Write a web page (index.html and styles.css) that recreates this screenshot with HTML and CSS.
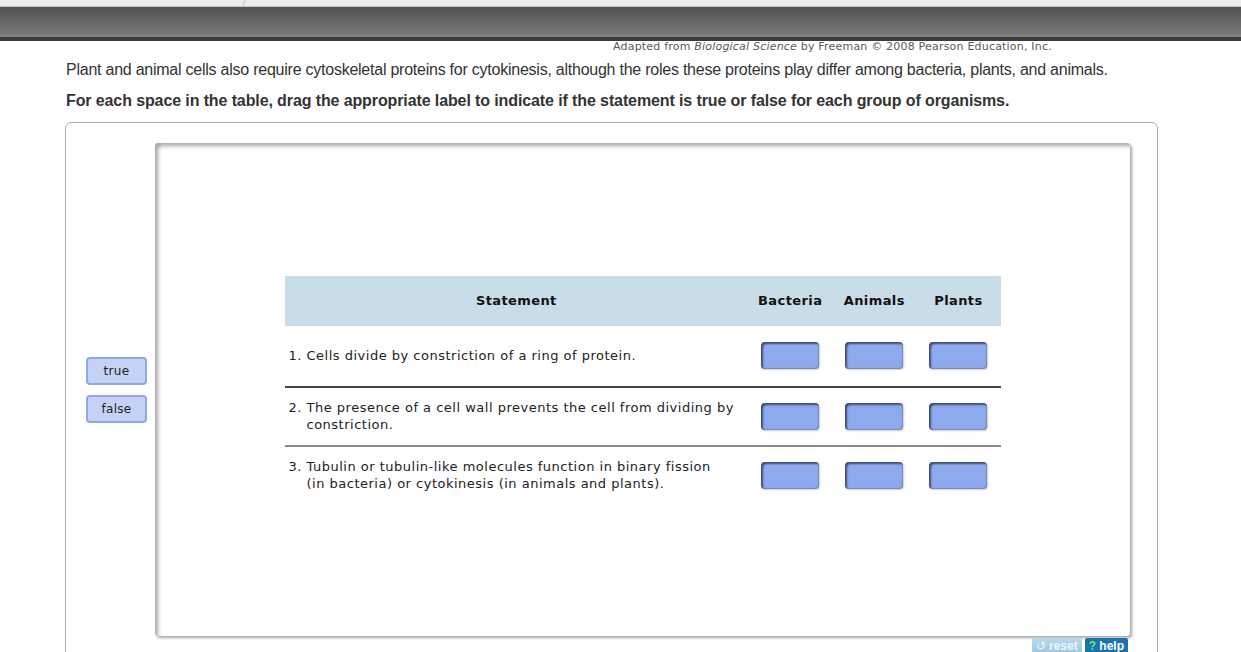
FILE: index.html
```html
<!DOCTYPE html>
<html lang="en">
<head>
<meta charset="utf-8">
<title>Cytokinesis activity</title>
<link rel="stylesheet" href="styles.css">
</head>
<body>
<div class="topstrip"><svg class="tick" width="4" height="6" viewBox="0 0 4 6"><line x1="3.5" y1="0" x2="0.5" y2="6" stroke="#bbb" stroke-width="1"/></svg></div>
<div class="bar"></div>
<div class="caption">Adapted from <i>Biological Science</i> by Freeman © 2008 Pearson Education, Inc.</div>
<p class="intro">Plant and animal cells also require cytoskeletal proteins for cytokinesis, although the roles these proteins play differ among bacteria, plants, and animals.</p>
<p class="instr">For each space in the table, drag the appropriate label to indicate if the statement is true or false for each group of organisms.</p>
<div class="activity">
  <div class="workspace">
    <div class="labels">
      <div class="label">true</div>
      <div class="label">false</div>
    </div>
    <div class="frame">
      <table class="grid">
        <thead>
          <tr>
            <th class="col-statement">Statement</th>
            <th class="col-group">Bacteria</th>
            <th class="col-group">Animals</th>
            <th class="col-group">Plants</th>
          </tr>
        </thead>
        <tbody>
          <tr class="row-1">
            <td class="statement"><div class="item">1. Cells divide by constriction of a ring of protein.</div></td>
            <td class="slot"><div class="drop"></div></td>
            <td class="slot"><div class="drop"></div></td>
            <td class="slot"><div class="drop"></div></td>
          </tr>
          <tr class="row-2">
            <td class="statement"><div class="item">2. The presence of a cell wall prevents the cell from dividing by constriction.</div></td>
            <td class="slot"><div class="drop"></div></td>
            <td class="slot"><div class="drop"></div></td>
            <td class="slot"><div class="drop"></div></td>
          </tr>
          <tr class="row-3">
            <td class="statement"><div class="item">3. Tubulin or tubulin-like molecules function in binary fission <span class="keep">(in bacteria)</span> or cytokinesis (in animals and plants).</div></td>
            <td class="slot"><div class="drop"></div></td>
            <td class="slot"><div class="drop"></div></td>
            <td class="slot"><div class="drop"></div></td>
          </tr>
        </tbody>
      </table>
    </div>
  </div>
  <div class="controls">
    <span class="btn reset"><span class="ico">↺</span> reset</span>
    <span class="btn help"><span class="q">?</span> help</span>
  </div>
</div>
</body>
</html>
```
FILE: styles.css
```css
html, body {
  margin: 0;
  padding: 0;
  background: #fff;
  overflow: hidden;
}

body {
  font-family: "Liberation Sans", Arial, sans-serif;
  color: #333;
}

.topstrip {
  height: 6px;
  background: #ececec;
  border-bottom: 1px solid #c6c6c6;
  padding-left: 242px;
  overflow: hidden;
}

.tick {
  display: block;
}

.bar {
  height: 30px;
  background: linear-gradient(#515151, #767676 85%, #858585);
  border-bottom: 4px solid #3b3b3b;
}

.caption {
  height: 11px;
  line-height: 11px;
  padding-left: 613px;
  font-family: "DejaVu Sans", Verdana, sans-serif;
  font-size: 11px;
  letter-spacing: 0.2px;
  color: #5a5a5a;
  white-space: nowrap;
}

.intro {
  margin: 9px 0 0 66px;
  font-size: 16px;
  line-height: 18px;
  letter-spacing: -0.24px;
  color: #333;
}

.instr {
  margin: 13px 0 0 66px;
  font-size: 16px;
  line-height: 18px;
  letter-spacing: -0.11px;
  font-weight: bold;
  color: #333;
}

.activity {
  margin: 12px 0 0 65px;
  width: 1093px;
  height: 560px;
  box-sizing: border-box;
  border: 1px solid #adadad;
  border-radius: 6px;
  padding: 20px 26px 0 20px;
}

.workspace {
  display: flex;
  align-items: center;
  gap: 8px;
}

.labels {
  display: flex;
  flex-direction: column;
  gap: 10px;
  width: 61px;
}

.label {
  height: 28px;
  box-sizing: border-box;
  border: 2px solid #8ea8e4;
  border-radius: 4px;
  background: #c4d2f6;
  font-family: "DejaVu Sans", Verdana, sans-serif;
  font-size: 12px;
  letter-spacing: 0.3px;
  line-height: 24px;
  text-align: center;
  color: #222;
}

.frame {
  width: 975px;
  height: 493px;
  box-sizing: border-box;
  border-radius: 3px;
  background: #fff;
  box-shadow: inset 4px 4px 4px -1px rgba(0, 0, 0, 0.35), 2px 2px 3px rgba(0, 0, 0, 0.35);
  display: flex;
  align-items: center;
  justify-content: center;
}

.grid {
  width: 716px;
  border-collapse: collapse;
  font-family: "DejaVu Sans", Verdana, sans-serif;
  font-size: 13px;
  letter-spacing: 0.5px;
  color: #222;
}

.grid thead tr {
  background: #c9dde8;
}

.grid th {
  height: 50px;
  padding: 0;
  font-weight: bold;
  font-size: 13px;
  letter-spacing: 0.4px;
  color: #111;
}

.col-statement {
  width: 463px;
}

.col-group {
  width: 84px;
}

.grid td {
  padding: 0;
}

.row-1 td {
  height: 60px;
  border-bottom: 2px solid #444;
}

.row-2 td {
  height: 57px;
  border-bottom: 2px solid #888;
}

.row-3 td {
  height: 57px;
}

.statement {
  padding-left: 4px !important;
}

.item {
  padding-left: 18px;
  text-indent: -18px;
  line-height: 17px;
  max-width: 452px;
}

.keep {
  white-space: nowrap;
}

.slot {
  text-align: center;
}

.drop {
  display: inline-block;
  vertical-align: middle;
  width: 58px;
  height: 27px;
  border-radius: 4px;
  background: #8eaaee;
  box-shadow: inset 2px 2px 2px rgba(0, 0, 0, 0.55), inset -1px -1px 1px rgba(0, 0, 0, 0.2), 1px 1px 2px rgba(0, 0, 0, 0.2);
}

.controls {
  display: flex;
  justify-content: flex-end;
  gap: 3px;
  margin-top: 2px;
  margin-right: 3px;
}

.btn {
  display: inline-block;
  height: 16px;
  line-height: 16px;
  padding: 0 4px;
  font-family: "Liberation Sans", Arial, sans-serif;
  font-weight: bold;
  font-size: 12px;
  color: #fff;
  border-radius: 2px 2px 0 0;
}

.reset {
  background: linear-gradient(#b6d9ec, #9cc7e0);
  color: #eef6fb;
}

.reset .ico {
  font-weight: normal;
}

.help {
  background: #1b74ad;
}

.help .q {
  color: #66ee66;
}
```
